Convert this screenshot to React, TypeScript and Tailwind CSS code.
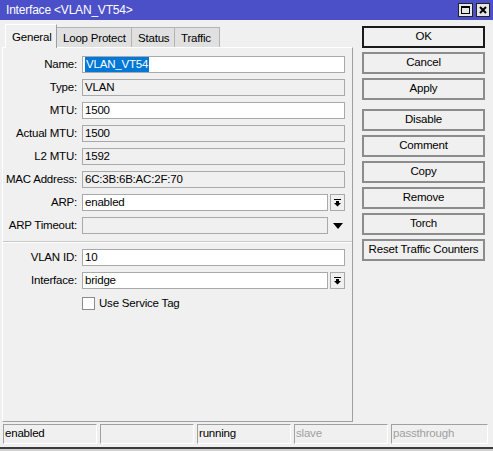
import React from 'react'

const font = { fontFamily: '"Liberation Sans", Arial, sans-serif' }

const DropGlyph = () => (
  <svg width="7" height="8" viewBox="0 0 7 8" className="block">
    <path d="M0 0h7v1H0z M2 2h3v2H2z M0 4h7L3.5 7.5z" fill="#000" />
  </svg>
)

const Row = ({ label, children }: { label: string; children: React.ReactNode }) => (
  <div className="flex items-center h-[17px]">
    <div className="w-[75px] shrink-0 text-right pr-[1px] leading-none whitespace-nowrap">{label}</div>
    <div className="ml-[4px] flex-1 flex items-center">{children}</div>
  </div>
)

const Field = ({ value, readOnly = false, selected = false }: { value: string; readOnly?: boolean; selected?: boolean }) => (
  <div
    className={`flex-1 h-[17px] border border-[#a9a9a9] flex items-center pl-[2px] leading-none whitespace-nowrap ${readOnly ? 'bg-[#f0f0f0]' : 'bg-white'}`}
  >
    {selected ? <span className="bg-[#0078d7] text-white px-[1px] py-[2px]">{value}</span> : value}
  </div>
)

const DropBtn = () => (
  <div className="ml-[2px] w-[15px] h-[17px] border border-[#a9a9a9] bg-[#f0f0f0] flex items-center justify-center">
    <DropGlyph />
  </div>
)

const Btn = ({ label, primary = false }: { label: string; primary?: boolean }) => (
  <div
    className={`w-[123px] h-[22px] flex items-center justify-center bg-[#f0f0f0] whitespace-nowrap ${primary ? 'border-2 border-[#1a1a1a]' : 'border-2 border-[#8c8c8c]'}`}
  >
    {label}
  </div>
)

const tabs = ['General', 'Loop Protect', 'Status', 'Traffic']

export default function App() {
  return (
    <div className="w-[493px] h-[451px] bg-[#f0f0f0] flex flex-col text-[11.5px] tracking-[-0.2px] text-black overflow-hidden" style={font}>
      {/* title bar */}
      <div className="h-[20px] bg-[#4b50c8] flex items-center justify-between pl-[6px] pr-[3px] text-white text-[12px]">
        <span>Interface &lt;VLAN_VT54&gt;</span>
        <div className="flex gap-[3px]">
          <div className="w-[15px] h-[14px] bg-[#e6e6e6] border border-[#222] flex items-center justify-center">
            <div className="w-[9px] h-[8px] border border-black border-t-2" />
          </div>
          <div className="w-[14px] h-[14px] bg-[#e6e6e6] border border-[#222] flex items-center justify-center">
            <svg width="8" height="8" viewBox="0 0 8 8">
              <path d="M1 1L7 7M7 1L1 7" stroke="#000" strokeWidth="2" />
            </svg>
          </div>
        </div>
      </div>

      <div className="flex flex-1">
        {/* left column */}
        <div className="w-[351px] ml-[2px] pt-[3px] flex flex-col">
          <div className="flex items-end h-[24px] pl-[3px] relative z-10">
            {tabs.map((t, i) =>
              i === 0 ? (
                <div key={t} className="w-[52px] h-[24px] bg-[#f0f0f0] border-l border-t border-white border-r border-r-[#a0a0a0] pl-[6px] pt-[4px] -mb-[1px] whitespace-nowrap">
                  {t}
                </div>
              ) : (
                <div
                  key={t}
                  className={`h-[20px] bg-[#e0e0e0] border-t border-r border-[#b4b4b4] px-[6px] pt-[2px] whitespace-nowrap ${i === 1 ? 'w-[75px]' : i === 2 ? 'w-[43px]' : 'w-[45px]'}`}
                >
                  {t}
                </div>
              )
            )}
          </div>
          <div className="flex-1 border-l border-t border-white border-r border-b border-r-[#a0a0a0] border-b-[#a0a0a0] pt-[8px] pr-[7px] flex flex-col gap-[6px]">
            <Row label="Name:"><Field value="VLAN_VT54" selected /></Row>
            <Row label="Type:"><Field value="VLAN" readOnly /></Row>
            <Row label="MTU:"><Field value="1500" /></Row>
            <Row label="Actual MTU:"><Field value="1500" readOnly /></Row>
            <Row label="L2 MTU:"><Field value="1592" readOnly /></Row>
            <Row label="MAC Address:"><Field value="6C:3B:6B:AC:2F:70" readOnly /></Row>
            <Row label="ARP:"><Field value="enabled" /><DropBtn /></Row>
            <Row label="ARP Timeout:">
              <Field value="" readOnly />
              <div className="ml-[2px] w-[15px] h-[17px] flex items-center justify-center">
                <svg width="10" height="6" viewBox="0 0 10 6">
                  <path d="M0 0h10L5 6z" fill="#000" />
                </svg>
              </div>
            </Row>
            <div className="h-[2px] mt-[1px] -mr-[7px] border-t border-[#c8c8c8] border-b border-b-white" />
            <Row label="VLAN ID:"><Field value="10" /></Row>
            <Row label="Interface:"><Field value="bridge" /><DropBtn /></Row>
            <div className="flex items-center h-[17px] pl-[79px]">
              <div className="w-[13px] h-[13px] bg-white border border-[#8c8c8c]" />
              <span className="ml-[4px]">Use Service Tag</span>
            </div>
          </div>
        </div>

        {/* right column */}
        <div className="ml-[9px] pt-[6px] flex flex-col gap-[4px]">
          <Btn label="OK" primary />
          <Btn label="Cancel" />
          <Btn label="Apply" />
          <div className="h-[1px]" />
          <Btn label="Disable" />
          <Btn label="Comment" />
          <Btn label="Copy" />
          <Btn label="Remove" />
          <Btn label="Torch" />
          <Btn label="Reset Traffic Counters" />
        </div>
      </div>

      {/* status bar */}
      <div className="flex gap-[3px] pl-[3px] pt-[2px] pb-[3px]">
        {[
          { t: 'enabled', c: 'text-black' },
          { t: '', c: '' },
          { t: 'running', c: 'text-black' },
          { t: 'slave', c: 'text-[#a0a0a0]' },
          { t: 'passthrough', c: 'text-[#a0a0a0]' },
        ].map((s, i) => (
          <div
            key={i}
            className={`h-[20px] ${i === 4 ? 'w-[97px]' : 'w-[94px]'} border-l border-t border-[#a0a0a0] border-r border-b border-r-white border-b-white flex items-center pl-[1px] ${s.c}`}
          >
            {s.t}
          </div>
        ))}
      </div>
      <div className="h-[2px] bg-[#3c3c3c]" />
      <div className="h-[2px] bg-[#d0d0d0]" />
    </div>
  )
}
